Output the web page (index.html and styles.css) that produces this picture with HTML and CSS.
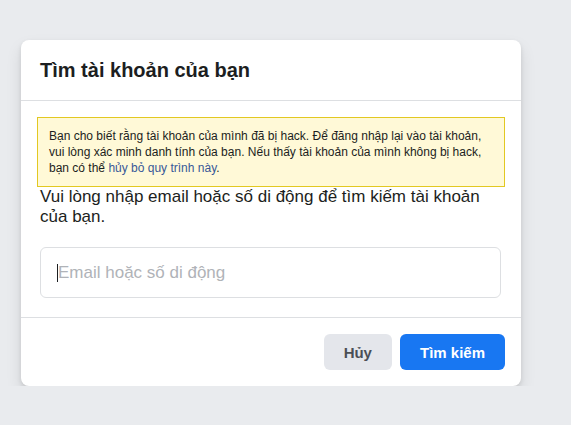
FILE: index.html
```html
<!DOCTYPE html>
<html lang="vi">
<head>
<meta charset="utf-8">
<title>Tìm tài khoản của bạn</title>
<link rel="stylesheet" href="styles.css">
</head>
<body>
<div class="page">
  <div class="card">
    <div class="card-header">
      <h2 class="title">Tìm tài khoản của bạn</h2>
    </div>
    <div class="card-body">
      <div class="notice">Bạn cho biết rằng tài khoản của mình đã bị hack. Để đăng nhập lại vào tài khoản, vui lòng xác minh danh tính của bạn. Nếu thấy tài khoản của mình không bị hack, bạn có thể <a class="notice-link" href="#">hủy bỏ quy trình này</a>.</div>
      <div class="inner">
        <p class="prompt">Vui lòng nhập email hoặc số di động để tìm kiếm tài khoản của bạn.</p>
        <div class="field"><span class="caret"></span><span class="placeholder">Email hoặc số di động</span></div>
      </div>
    </div>
    <div class="card-footer">
      <button class="btn btn-gray">Hủy</button>
      <button class="btn btn-blue">Tìm kiếm</button>
    </div>
  </div>
</div>
</body>
</html>
```
FILE: styles.css
```css
html, body {
  margin: 0;
  padding: 0;
  background: #e9ebee;
  font-family: "Liberation Sans", Arial, sans-serif;
  color: #1c1e21;
}
.page {
  padding: 40px 0 0 21px;
}
.card {
  width: 500px;
  background: #fff;
  border-radius: 8px;
  box-shadow: 0 2px 4px rgba(0,0,0,.1), 0 8px 16px rgba(0,0,0,.1);
}
.card-header {
  padding: 18px 19px 18px;
  border-bottom: 1px solid #dddfe2;
}
.title {
  margin: 0;
  font-size: 20px;
  line-height: 24px;
  font-weight: bold;
  color: #1c1e21;
}
.card-body {
  padding: 16px 16px 19px;
}
.notice {
  background: #fff9d7;
  border: 1px solid #e2c822;
  padding: 10px 11px;
  font-size: 12px;
  line-height: 16px;
  color: #1c1e21;
}
.notice-link {
  color: #385898;
  text-decoration: none;
}
.inner {
  padding: 0 4px 0 3px;
}
.prompt {
  margin: 0 0 20px;
  font-size: 17px;
  line-height: 20px;
  color: #1c1e21;
}
.field {
  height: 49px;
  border: 1px solid #dddfe2;
  border-radius: 6px;
  display: flex;
  align-items: center;
  padding: 0 16px;
}
.caret {
  width: 1px;
  height: 18px;
  background: #1c1e21;
}
.placeholder {
  font-size: 17px;
  color: #b0b3b8;
}
.card-footer {
  border-top: 1px solid #dddfe2;
  padding: 16px;
  display: flex;
  justify-content: flex-end;
  gap: 8px;
}
.btn {
  height: 36px;
  border: none;
  border-radius: 6px;
  padding: 0 20px;
  font-family: "Liberation Sans", Arial, sans-serif;
  font-size: 15px;
  font-weight: bold;
}
.btn-gray {
  background: #e4e6eb;
  color: #4b4f56;
}
.btn-blue {
  background: #1877f2;
  color: #fff;
}
```
